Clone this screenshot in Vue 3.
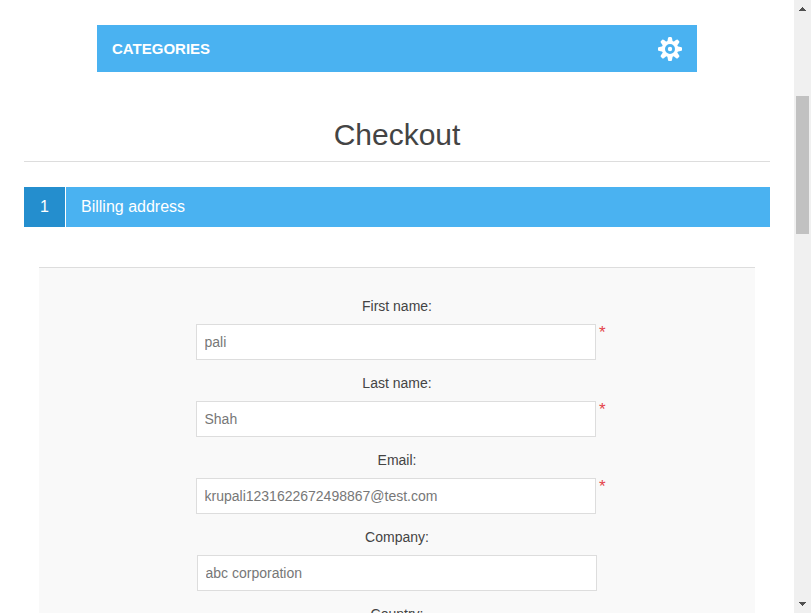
<script setup>
import { ref } from 'vue'

const fields = ref([
  { id: 'first', label: 'First name:', value: 'pali', required: true },
  { id: 'last', label: 'Last name:', value: 'Shah', required: true },
  { id: 'email', label: 'Email:', value: 'krupali1231622672498867@test.com', required: true },
  { id: 'company', label: 'Company:', value: 'abc corporation', required: false },
  { id: 'country', label: 'Country:', value: '', required: false },
])
const teeth = [0, 45, 90, 135, 180, 225, 270, 315]
</script>

<template>
  <div class="window">
    <main class="page">
      <nav class="categories">
        <strong>CATEGORIES</strong>
        <svg class="gear" viewBox="-12 -12 24 24" width="24" height="24">
          <path
            v-for="a in teeth"
            :key="a"
            :transform="`rotate(${a})`"
            d="M-2.7-7L-2.1-10.5Q-2-12-1-12H1Q2-12 2.1-10.5L2.7-7Z"
            fill="#fff"
          />
          <circle r="6.6" fill="none" stroke="#fff" stroke-width="3.2" />
          <circle r="2.2" fill="#fff" />
        </svg>
      </nav>

      <h1>Checkout</h1>

      <div class="step">
        <span class="number">1</span>
        <h2>Billing address</h2>
      </div>

      <form class="panel">
        <div v-for="f in fields" :key="f.id" class="field">
          <label :for="f.id">{{ f.label }}</label>
          <div class="control">
            <input :id="f.id" v-model="f.value" type="text" />
            <span v-if="f.required" class="required">*</span>
          </div>
        </div>
      </form>
    </main>

    <aside class="scrollbar">
      <svg class="arrow" width="7" height="4" viewBox="0 0 7 4" shape-rendering="crispEdges">
        <path d="M3 0h1v1h1v1h1v1h1v1H0V3h1V2h1V1h1z" fill="#505050" />
      </svg>
      <div class="thumb"></div>
      <svg class="arrow down" width="7" height="4" viewBox="0 0 7 4" shape-rendering="crispEdges">
        <path d="M0 0h7v1H6v1H5v1H4v1H3V3H2V2H1V1H0z" fill="#505050" />
      </svg>
    </aside>
  </div>
</template>

<style>
body {
  margin: 0;
  overflow: hidden;
}
</style>

<style scoped>
* {
  box-sizing: border-box;
}
.window {
  display: flex;
  height: 613px;
  overflow: hidden;
  background: #fff;
  font: 14px/17px "Liberation Sans", Arial, sans-serif;
  color: #444;
}
.page {
  width: 794px;
  height: 613px;
  padding: 25px 24px 0;
  overflow: hidden;
}
.categories {
  display: flex;
  align-items: center;
  justify-content: space-between;
  width: 600px;
  height: 47px;
  margin: 0 auto;
  padding: 0 15px;
  background: #4ab2f1;
  color: #fff;
  font-size: 15px;
}
.gear {
  display: block;
}
h1 {
  height: 52px;
  margin: 38px 0 25px;
  border-bottom: 1px solid #ddd;
  font-size: 30px;
  font-weight: 400;
  line-height: 50px;
  text-align: center;
}
.step {
  display: flex;
  height: 40px;
  background: #4ab2f1;
  color: #fff;
  font-size: 16px;
  line-height: 40px;
}
.number {
  width: 42px;
  border-right: 1px solid #fff;
  background: #248ece;
  text-align: center;
}
h2 {
  margin: 0;
  padding-left: 15px;
  font-size: 16px;
  font-weight: 400;
}
.panel {
  margin: 40px 15px 0;
  padding-top: 30px;
  border-top: 1px solid #ddd;
  background: #f9f9f9;
}
.field {
  height: 77px;
}
label {
  display: block;
  text-align: center;
}
.control {
  display: flex;
  justify-content: center;
  gap: 3px;
  margin-top: 9px;
}
.control input {
  flex: none;
  width: 400px;
  height: 36px;
  margin: 0;
  padding: 0 7.5px;
  border: 1px solid #ddd;
  border-radius: 0;
  outline: 0;
  background: #fff;
  color: #777;
  font: 14px "Liberation Sans", Arial, sans-serif;
}
.required {
  width: 7px;
  margin-right: -8px;
  color: #e4434b;
  font-size: 17px;
  line-height: 18px;
}
.scrollbar {
  display: flex;
  flex-direction: column;
  width: 17px;
  height: 613px;
  padding: 7px 2px;
  background: #f0f0f0;
}
.arrow {
  display: block;
  flex: none;
  margin-left: 3px;
}
.thumb {
  flex: none;
  width: 13px;
  height: 138px;
  margin-top: 85px;
  background: #c1c1c1;
}
.down {
  margin-top: auto;
}
</style>
